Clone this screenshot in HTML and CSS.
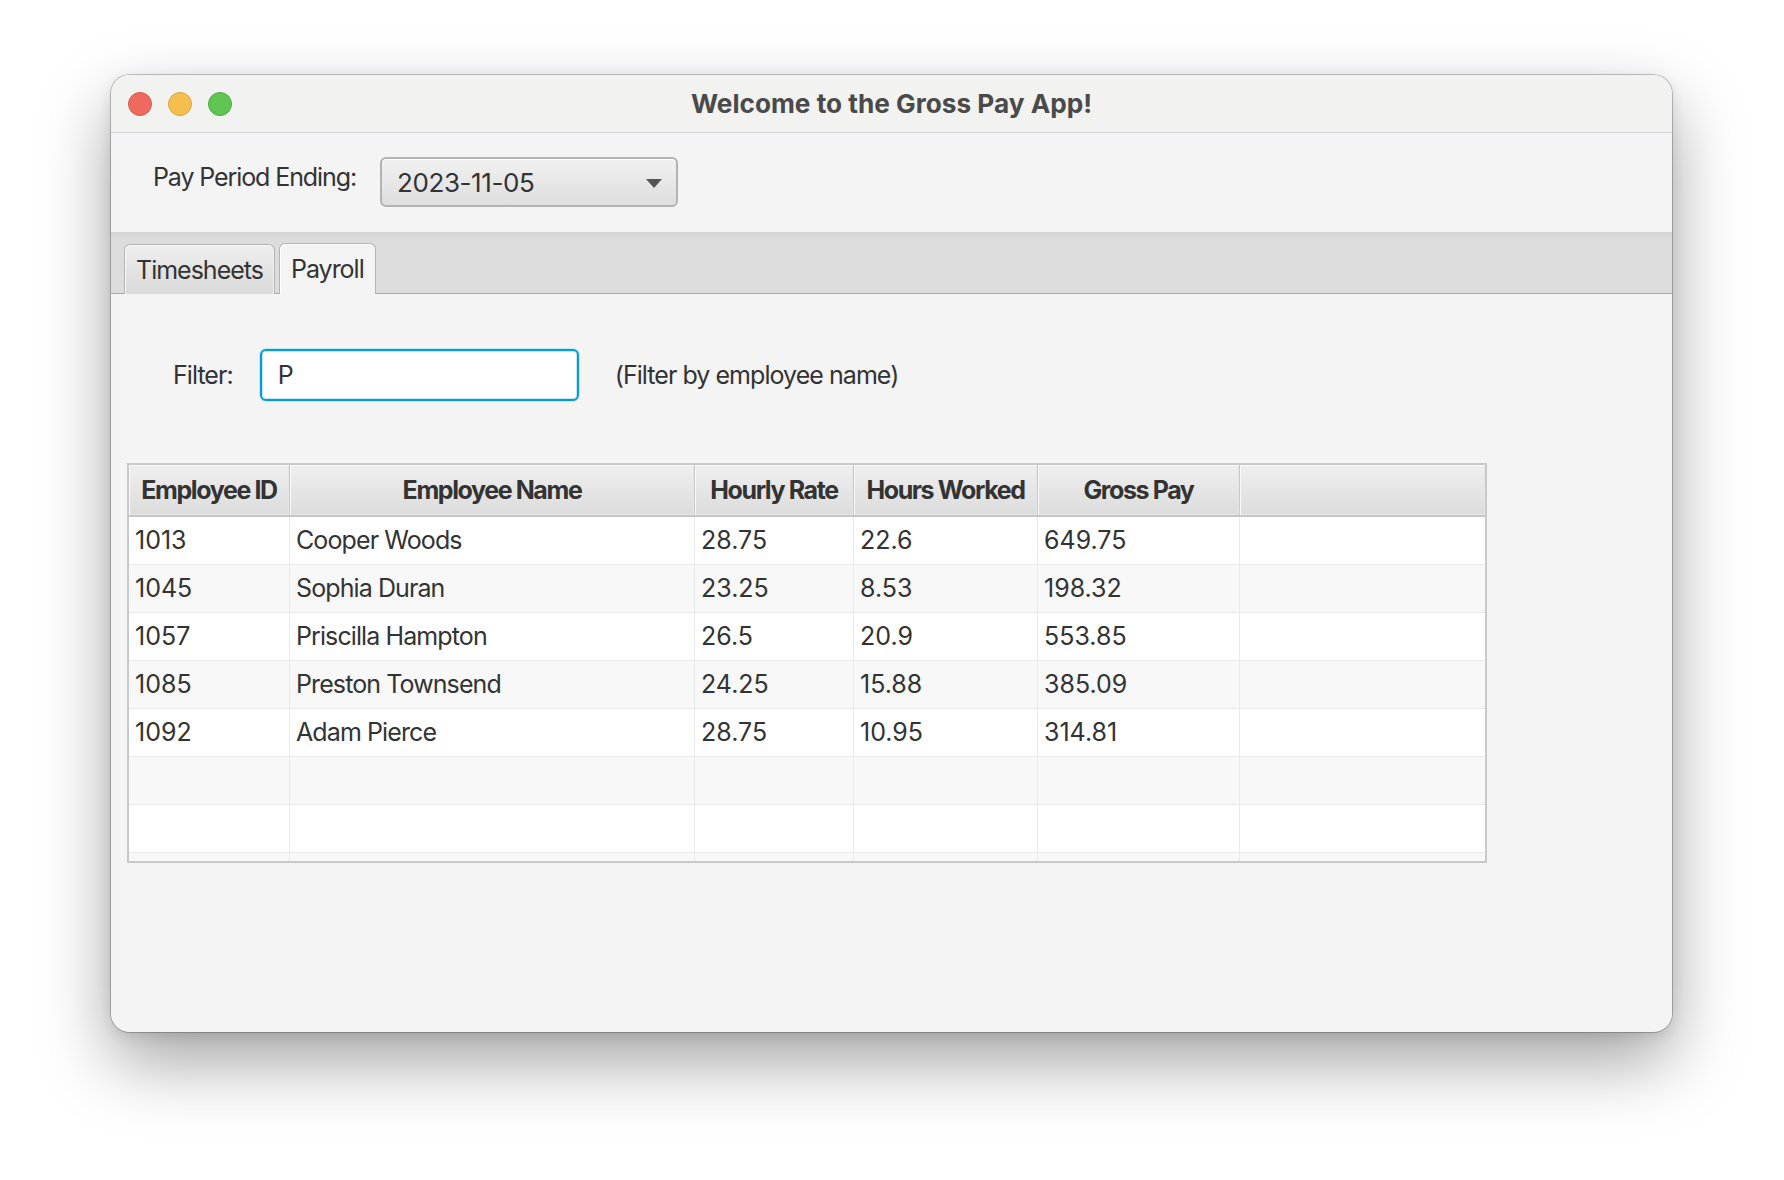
FILE: index.html
```html
<!DOCTYPE html>
<html lang="en">
<head>
<meta charset="utf-8">
<title>Welcome to the Gross Pay App!</title>
<link rel="stylesheet" href="styles.css">
</head>
<body>
<div class="window">
  <div class="titlebar">
    <div class="lights">
      <span class="light light-red"></span>
      <span class="light light-yellow"></span>
      <span class="light light-green"></span>
    </div>
    <div class="title">Welcome to the Gross Pay App!</div>
    <div class="spacer"></div>
  </div>

  <div class="period-row">
    <span class="period-label">Pay Period Ending:</span>
    <div class="combo">
      <span class="combo-value">2023-11-05</span>
      <span class="combo-arrow"></span>
    </div>
  </div>

  <div class="tab-header">
    <div class="tab">Timesheets</div>
    <div class="tab tab-selected">Payroll</div>
  </div>

  <div class="content">
    <div class="filter-row">
      <span class="filter-label">Filter:</span>
      <div class="filter-field">P</div>
      <span class="filter-hint">(Filter by employee name)</span>
    </div>

    <div class="table">
      <div class="thead">
        <div class="th">Employee ID</div>
        <div class="th">Employee Name</div>
        <div class="th">Hourly Rate</div>
        <div class="th">Hours Worked</div>
        <div class="th">Gross Pay</div>
        <div class="th th-last"></div>
      </div>
      <div class="tr">
        <div class="td">1013</div><div class="td td-name">Cooper Woods</div><div class="td">28.75</div><div class="td">22.6</div><div class="td">649.75</div><div class="td td-last"></div>
      </div>
      <div class="tr tr-alt">
        <div class="td">1045</div><div class="td td-name">Sophia Duran</div><div class="td">23.25</div><div class="td">8.53</div><div class="td">198.32</div><div class="td td-last"></div>
      </div>
      <div class="tr">
        <div class="td">1057</div><div class="td td-name">Priscilla Hampton</div><div class="td">26.5</div><div class="td">20.9</div><div class="td">553.85</div><div class="td td-last"></div>
      </div>
      <div class="tr tr-alt">
        <div class="td">1085</div><div class="td td-name">Preston Townsend</div><div class="td">24.25</div><div class="td">15.88</div><div class="td">385.09</div><div class="td td-last"></div>
      </div>
      <div class="tr">
        <div class="td">1092</div><div class="td td-name">Adam Pierce</div><div class="td">28.75</div><div class="td">10.95</div><div class="td">314.81</div><div class="td td-last"></div>
      </div>
      <div class="tr tr-alt">
        <div class="td"></div><div class="td"></div><div class="td"></div><div class="td"></div><div class="td"></div><div class="td td-last"></div>
      </div>
      <div class="tr">
        <div class="td"></div><div class="td"></div><div class="td"></div><div class="td"></div><div class="td"></div><div class="td td-last"></div>
      </div>
      <div class="tr tr-alt">
        <div class="td"></div><div class="td"></div><div class="td"></div><div class="td"></div><div class="td"></div><div class="td td-last"></div>
      </div>
    </div>
  </div>
</div>
</body>
</html>
```

FILE: styles.css
```css
html, body {
  margin: 0;
  padding: 0;
  background: #ffffff;
  overflow: hidden;
}

body {
  width: 1784px;
  height: 1180px;
  font-family: "Inter", "Noto Sans", "Liberation Sans", sans-serif;
  color: #333333;
  font-size: 25px;
}

.window {
  margin: 75px 0 0 111px;
  width: 1561px;
  height: 957px;
  border-radius: 19px;
  overflow: hidden;
  background: #f4f4f4;
  box-shadow: 0 0 0 1px rgba(0, 0, 0, 0.22),
              0 30px 70px rgba(0, 0, 0, 0.36),
              0 4px 14px rgba(0, 0, 0, 0.10);
  display: flex;
  flex-direction: column;
}

/* ---------- title bar ---------- */
.titlebar {
  box-sizing: border-box;
  height: 58px;
  border-bottom: 1px solid #d3d3d3;
  background: #f2f2f1;
  display: grid;
  grid-template-columns: 1fr auto 1fr;
  align-items: center;
}

.lights {
  display: flex;
  gap: 16px;
  padding-left: 17px;
}

.light {
  width: 24px;
  height: 24px;
  border-radius: 50%;
  box-sizing: border-box;
}

.light-red { background: #ee6a5e; border: 1px solid #d65a4e; }
.light-yellow { background: #f5bf4f; border: 1px solid #d8a33f; }
.light-green { background: #61c554; border: 1px solid #4ea941; }

.title {
  font-weight: 700;
  font-size: 26.2px;
  color: #4a4a4a;
  letter-spacing: 0;
}

/* ---------- pay period row ---------- */
.period-row {
  box-sizing: border-box;
  height: 99px;
  padding: 24px 0 0 42px;
  display: flex;
  align-items: flex-start;
}

.period-label {
  line-height: 30px;
  margin-top: 5px;
  margin-right: 24px;
  letter-spacing: -1.1px;
}

.combo {
  box-sizing: border-box;
  width: 298px;
  height: 50px;
  border: 2px solid #b3b3b3;
  border-radius: 6px;
  background: linear-gradient(#f1f1f1, #dedede);
  box-shadow: inset 0 1px 0 #ffffff;
  display: flex;
  align-items: center;
  justify-content: space-between;
  padding: 0 14px 0 15px;
}

.combo-value {
  font-size: 26px;
  letter-spacing: -0.4px;
  color: #333333;
}

.combo-arrow {
  width: 0;
  height: 0;
  border-left: 8.5px solid transparent;
  border-right: 8.5px solid transparent;
  border-top: 9px solid #555555;
  margin-top: 2px;
}

/* ---------- tabs ---------- */
.tab-header {
  box-sizing: border-box;
  height: 62px;
  background: linear-gradient(#d4d4d4, #dcdcdc 8px, #dcdcdc);
  border-bottom: 1px solid #ababab;
  display: flex;
  align-items: flex-end;
  gap: 4px;
  padding-left: 13px;
}

.tab {
  box-sizing: border-box;
  height: 50px;
  margin-bottom: -1px;
  padding: 0 11px;
  border: 1px solid #b4b4b4;
  border-bottom: none;
  border-radius: 6px 6px 0 0;
  background: linear-gradient(#eeeeee, #dadada);
  box-shadow: inset 1px 1px 0 #f7f7f7, inset -1px 0 0 #f0f0f0;
  display: flex;
  align-items: center;
  font-size: 25px;
  letter-spacing: -1px;
  color: #333333;
}

.tab-selected {
  height: 51px;
  background: #f4f4f4;
  box-shadow: inset 1px 1px 0 #ffffff;
}

/* ---------- content ---------- */
.content {
  flex: 1;
  background: #f4f4f4;
  padding-top: 55px;
}

.filter-row {
  display: flex;
  align-items: center;
  padding-left: 62px;
  letter-spacing: -0.95px;
}

.filter-label {
  margin-right: 27px;
}

.filter-field {
  box-sizing: border-box;
  width: 319px;
  height: 52px;
  background: #ffffff;
  border: 2px solid #0a9ad6;
  border-radius: 6px;
  box-shadow: 0 0 0 1px rgba(3, 158, 211, 0.18), inset 0 0 0 1px rgba(3, 158, 211, 0.25);
  padding-left: 16px;
  display: flex;
  align-items: center;
  font-size: 25px;
  letter-spacing: 0;
  color: #333333;
  margin-right: 36px;
}

.filter-hint {
  color: #333333;
}

/* ---------- table ---------- */
.table {
  box-sizing: border-box;
  margin: 62px 0 0 16px;
  width: 1360px;
  height: 400px;
  border: 2px solid #c8c8c8;
  background: #ffffff;
  overflow: hidden;
}

.thead,
.tr {
  display: grid;
  grid-template-columns: 161px 405px 159px 184px 202px 1fr;
}

.thead {
  box-sizing: border-box;
  height: 52px;
  border-bottom: 2px solid #c6c6c6;
}

.th {
  background: linear-gradient(#efefef, #dcdcdc);
  border-right: 1px solid #c8c8c8;
  box-shadow: inset 1px 1px 0 #f9f9f9, inset -1px -1px 0 #e6e6e6;
  display: flex;
  align-items: center;
  justify-content: center;
  font-weight: 700;
  font-size: 25px;
  letter-spacing: -1.4px;
  color: #333333;
}

.th-last {
  border-right: none;
}

.tr {
  box-sizing: border-box;
  height: 48px;
  border-bottom: 1px solid #ebebeb;
  background: #ffffff;
}

.tr-alt {
  background: #f8f8f8;
}

.td {
  border-right: 1px solid #ebebeb;
  display: flex;
  align-items: center;
  padding-left: 6px;
  padding-bottom: 1px;
  font-size: 25px;
  color: #333333;
  white-space: nowrap;
}

.td-name {
  letter-spacing: -0.9px;
}

.td-last {
  border-right: none;
}
```
